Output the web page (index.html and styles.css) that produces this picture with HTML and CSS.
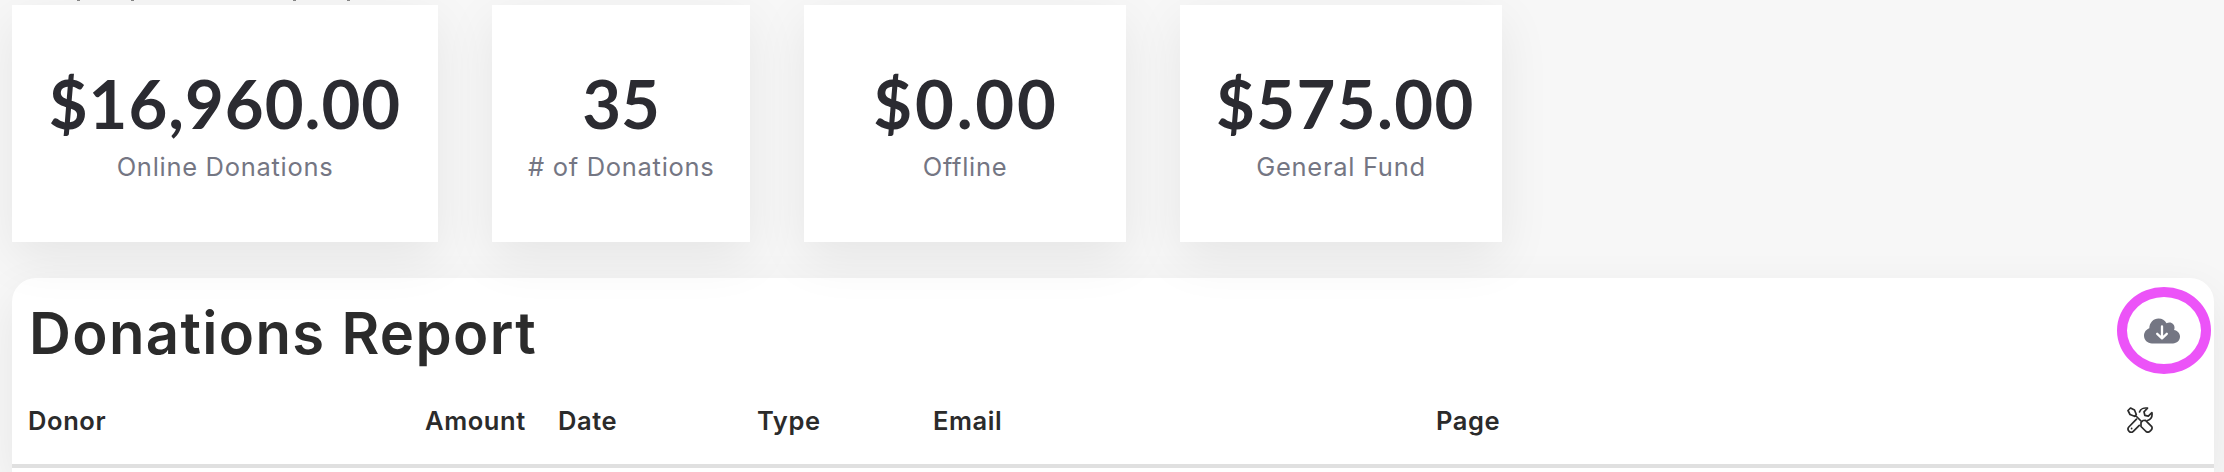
FILE: index.html
```
<!DOCTYPE html>
<html lang="en">
<head>
<meta charset="utf-8">
<meta name="viewport" content="width=device-width">
<title>Donations Report</title>
<link rel="stylesheet" href="styles.css">
</head>
<body>
  <div class="filterEdge"><i></i><i></i><i></i><i></i></div>

  <section class="stats">
    <div class="stat online">
      <strong>$16,960.00</strong>
      <span>Online Donations</span>
    </div>
    <div class="stat count">
      <strong>35</strong>
      <span># of Donations</span>
    </div>
    <div class="stat offline">
      <strong>$0.00</strong>
      <span>Offline</span>
    </div>
    <div class="stat fund">
      <strong>$575.00</strong>
      <span>General Fund</span>
    </div>
  </section>

  <section class="report">
    <header class="reportHeader">
      <h1>Donations Report</h1>
      <button class="download" title="Download">
        <svg width="36" height="26" viewBox="0 0 36 26">
          <path fill="#747683" d="M8 25.500C3.500 25.500 0 22 0 17.800c0-3.500 2.200-6.400 5.300-7.500C5.500 4.500 9.500.5 14.500.5c3.600 0 6.500 1.800 8 4.800 4-2.300 8.500.5 8 5-.1.700-.2 1.300-.5 1.800 3.500.6 6 3.300 6 6.500 0 3.900-3.200 6.900-7 6.900z"/>
          <path fill="none" stroke="#fff" stroke-width="2.300" stroke-linecap="round" stroke-linejoin="round" d="M18 8.500v11.500M13.200 15.800l4.800 4.600 4.800-4.600"/>
        </svg>
      </button>
    </header>
    <div class="columns">
      <span class="donor">Donor</span>
      <span class="amount">Amount</span>
      <span class="date">Date</span>
      <span class="type">Type</span>
      <span class="email">Email</span>
      <span class="page">Page</span>
      <span class="tools">
        <svg width="26" height="26" viewBox="0 0 26 26">
          <g fill="none" stroke="#2b2b2b" stroke-width="1.700" stroke-linejoin="round" stroke-linecap="round">
            <path d="M1 3.500 3.500 1l4 2 1.800 4.500L7.500 9.300 3 7.500zM8.500 8.500l6 6"/>
            <path d="M14 15.500l2-2 2.500-.2 6 6c2 2.500-2.500 7.500-5.500 5.200l-5-5z"/>
            <path d="M12.500 5C13.500 2 17 .5 20.500 1.200L17 4.800l.8 3.500 3.500.8 3.600-3.500c.6 3.500-1 6.800-4.400 7.900"/>
            <path d="M9.500 12.200 1.800 20c-2.500 3 1.800 7 4.500 4.400l6-6"/>
          </g>
          <circle cx="4.600" cy="21.500" r=".9" fill="#2b2b2b"/>
        </svg>
      </span>
    </div>
  </section>
</body>
</html>
```

FILE: styles.css
```
* {
	box-sizing: border-box;
}
body {
	margin: 0;
	height: 472px;
	overflow: hidden;
	background: #f7f7f7;
	color: #2b2b2b;
	font-family: Inter, "Open Sans", sans-serif;
}

.filterEdge {
	display: flex;
	height: 5px;
	padding-left: 77px;
}
.filterEdge i {
	width: 3px;
	height: 1px;
	margin-right: 51px;
	background: #888;
}
.filterEdge i:nth-child(2) { margin-right: 159px; }

.stats {
	display: flex;
	gap: 54px;
	padding-left: 12px;
}
.stat {
	display: flex;
	flex-direction: column;
	height: 237px;
	padding: 57px 36px 0;
	background: #fff;
	box-shadow: 0 16px 48px rgba(0, 0, 0, .075);
	text-align: center;
	white-space: nowrap;
}
.online { width: 426px; }
.count { width: 258px; }
.offline, .fund { width: 322px; }
.stat strong {
	color: #2b2b31;
	font: 700 67px/82px Lato, sans-serif;
	letter-spacing: 1px;
}
.stat.count strong { letter-spacing: 0; }
.stat.offline strong { letter-spacing: 2.8px; padding-left: 2px; }
.stat.fund strong { letter-spacing: 1.4px; }
.stat span {
	color: #747683;
	font-size: 25.5px;
	line-height: 46px;
	letter-spacing: .7px;
}

.report {
	width: 2202px;
	height: 194px;
	margin: 36px 0 0 12px;
	background: #fff;
	border-radius: 24px 24px 0 0;
	box-shadow: 0 16px 48px rgba(0, 0, 0, .075);
}
.reportHeader {
	display: flex;
	justify-content: space-between;
	height: 104px;
	padding: 9px 3px 0 17px;
}
h1 {
	margin: 0;
	font-size: 58px;
	line-height: 93px;
	font-weight: 600;
	letter-spacing: 1.35px;
}
.download {
	display: flex;
	align-items: center;
	justify-content: center;
	width: 94px;
	height: 87px;
	padding: 0 4px 0 0;
	border: 10px solid #ec53f8;
	border-radius: 50%;
	background: none;
}
.columns {
	display: flex;
	align-items: center;
	height: 86px;
	padding: 0 0 5px 16px;
	border-bottom: 4px solid #e0e0e0;
	font-size: 25.5px;
	font-weight: 600;
	letter-spacing: .6px;
}
.columns span { flex: none; }
.donor { width: 397px; }
.amount { width: 133px; }
.date { width: 199px; }
.type { width: 176px; }
.email { width: 503px; }
.page { width: 691px; }
.tools svg { display: block; margin-bottom: 2px; }
```
